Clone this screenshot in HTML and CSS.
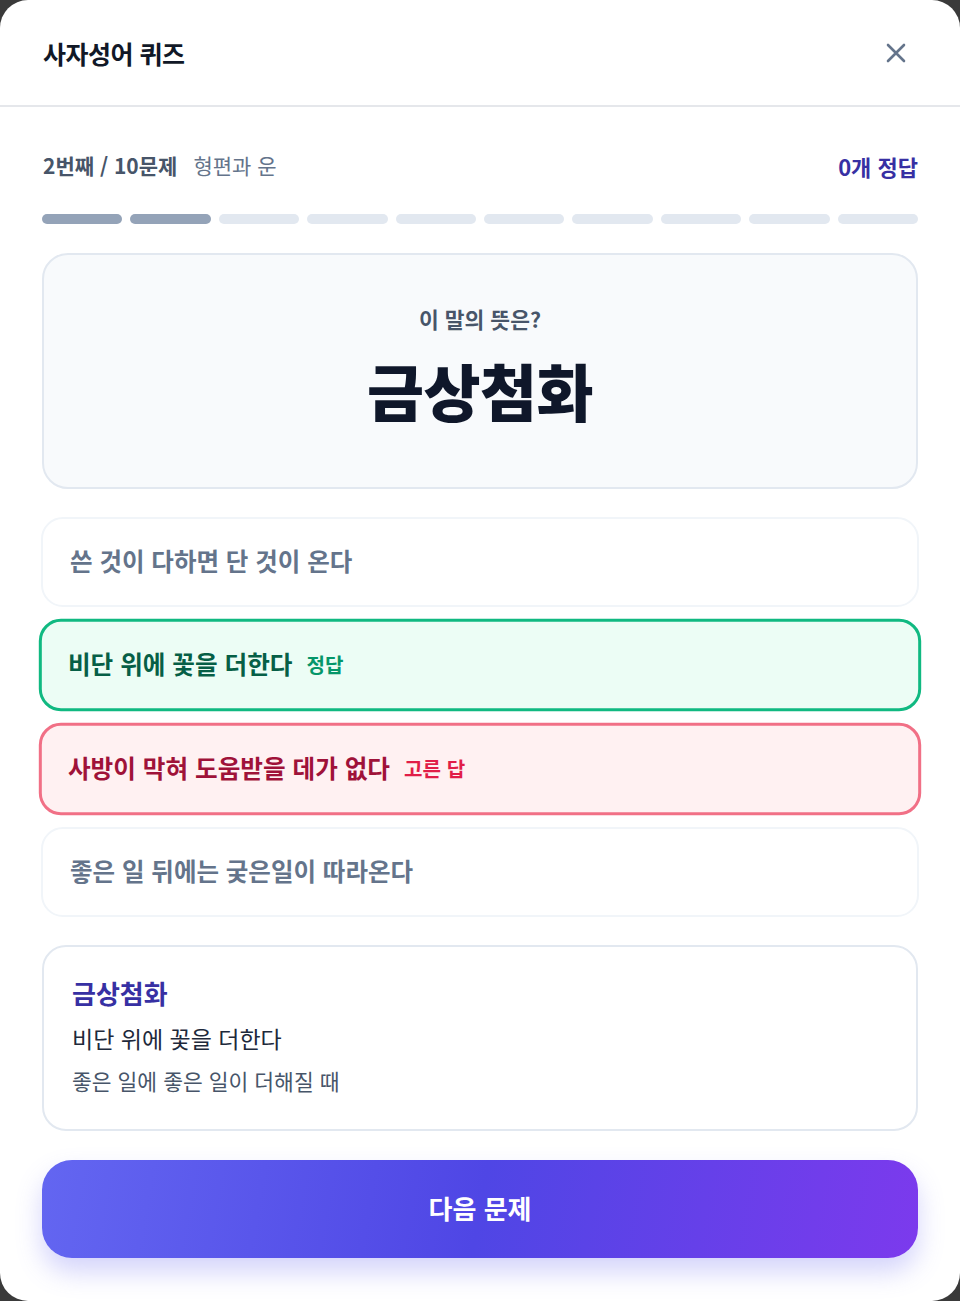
FILE: index.html
```html
<!DOCTYPE html>
<html lang="ko">
<head>
<meta charset="utf-8">
<title>사자성어 퀴즈</title>
<link rel="stylesheet" href="styles.css">
</head>
<body>
<div class="modal">
  <header class="header">
    <h1 class="title">사자성어 퀴즈</h1>
    <button class="close" aria-label="닫기">
      <svg width="24" height="24" viewBox="0 0 24 24" fill="none" stroke="#64748b" stroke-width="2.6" stroke-linecap="round"><path d="M4 4L20 20M20 4L4 20"/></svg>
    </button>
  </header>
  <main class="content">
    <div class="progress-row">
      <div class="progress-left"><span class="count">2번째 / 10문제</span><span class="category">형편과 운</span></div>
      <div class="score">0개 정답</div>
    </div>
    <div class="bars">
      <span class="bar done"></span><span class="bar done"></span><span class="bar"></span><span class="bar"></span><span class="bar"></span><span class="bar"></span><span class="bar"></span><span class="bar"></span><span class="bar"></span><span class="bar"></span>
    </div>
    <section class="question">
      <div class="q-label">이 말의 뜻은?</div>
      <div class="q-word">금상첨화</div>
    </section>
    <div class="options">
      <div class="option">쓴 것이 다하면 단 것이 온다</div>
      <div class="option correct">비단 위에 꽃을 더한다<span class="badge">정답</span></div>
      <div class="option wrong">사방이 막혀 도움받을 데가 없다<span class="badge">고른 답</span></div>
      <div class="option">좋은 일 뒤에는 궂은일이 따라온다</div>
    </div>
    <section class="explain">
      <div class="ex-title">금상첨화</div>
      <div class="ex-literal">비단 위에 꽃을 더한다</div>
      <div class="ex-meaning">좋은 일에 좋은 일이 더해질 때</div>
    </section>
    <button class="next">다음 문제</button>
  </main>
</div>
</body>
</html>
```
FILE: styles.css
```css
* { box-sizing: border-box; }
html, body { margin: 0; padding: 0; }
body {
  background: #3a3a3a;
  font-family: "Noto Sans CJK KR", "Noto Sans", sans-serif;
}
.modal {
  width: 960px;
  height: 1301px;
  background: #ffffff;
  border-radius: 28px;
  overflow: hidden;
  display: flex;
  flex-direction: column;
}
.header {
  height: 107px;
  padding: 0 42px 0 43px;
  border-bottom: 2px solid #e5e7eb;
  display: flex;
  align-items: center;
  justify-content: space-between;
}
.title {
  margin: 0;
  font-size: 25px;
  line-height: 34px;
  font-weight: 700;
  letter-spacing: -0.5px;
  color: #111827;
}
.close {
  border: 0;
  background: none;
  padding: 0;
  width: 24px;
  height: 24px;
  margin-right: 10px;
  display: flex;
}
.content {
  flex: 1;
  padding: 45px 41px 0;
  display: flex;
  flex-direction: column;
}
.progress-row {
  display: flex;
  justify-content: space-between;
  align-items: center;
  padding: 0 1px 0 2px;
  height: 28px;
  line-height: 28px;
}
.count {
  font-size: 21px;
  font-weight: 700;
  color: #475569;
}
.category {
  font-size: 21px;
  font-weight: 400;
  color: #64748b;
  margin-left: 16px;
}
.score {
  font-size: 22px;
  font-weight: 700;
  color: #3730a3;
}
.bars {
  margin: 34px 1px 0;
  display: flex;
  gap: 8px;
}
.bar {
  flex: 1;
  height: 10px;
  border-radius: 5px;
  background: #e2e8f0;
}
.bar.done { background: #94a3b8; }
.question {
  margin: 29px 1px 0;
  height: 236px;
  border: 2px solid #e2e8f0;
  border-radius: 26px;
  background: #f8fafc;
  padding: 50px 24px 0;
  text-align: center;
}
.q-label {
  font-size: 21.5px;
  line-height: 28px;
  font-weight: 600;
  color: #475569;
}
.q-word {
  margin-top: 21px;
  font-size: 62px;
  line-height: 72px;
  font-weight: 900;
  color: #0f172a;
  letter-spacing: -0.5px;
}
.options {
  margin-top: 28px;
  display: flex;
  flex-direction: column;
  gap: 12px;
}
.option {
  display: flex;
  align-items: center;
  gap: 14px;
  height: 90px;
  padding: 0 27px 4px;
  border: 2px solid #f1f5f9;
  border-radius: 22px;
  background: #ffffff;
  font-size: 24.5px;
  font-weight: 700;
  color: #64748b;
}
.option.correct,
.option.wrong {
  height: 92px;
  border-width: 3px;
  padding: 0 26px 4px;
  transform: scale(1.005);
}
.option.correct {
  border-color: #10b981;
  background: #ecfdf5;
  color: #065f46;
}
.option.wrong {
  border-color: #f17086;
  background: #fff1f2;
  color: #9f1239;
}
.badge {
  font-size: 20px;
  font-weight: 700;
  margin-top: 3px;
}
.correct .badge { color: #059669; }
.wrong .badge { color: #e11d48; }
.explain {
  margin: 28px 1px 0;
  border: 2px solid #e2e8f0;
  border-radius: 24px;
  background: #ffffff;
  padding: 29px 28px 34px;
}
.ex-title {
  font-size: 26px;
  line-height: 34px;
  font-weight: 700;
  color: #3730a3;
}
.ex-literal {
  margin-top: 12px;
  font-size: 23px;
  line-height: 32px;
  font-weight: 400;
  color: #1e293b;
}
.ex-meaning {
  margin-top: 13px;
  font-size: 21.5px;
  line-height: 28px;
  font-weight: 400;
  color: #475569;
}
.next {
  margin: 29px 1px 0;
  height: 98px;
  padding: 0 0 4px;
  border: 0;
  border-radius: 30px;
  background: linear-gradient(100deg, #6366f1 0%, #4f46e5 50%, #7c3aed 100%);
  box-shadow: 0 14px 26px rgba(99, 102, 241, 0.28);
  color: #ffffff;
  font-family: "Noto Sans CJK KR", "Noto Sans", sans-serif;
  font-size: 26px;
  font-weight: 700;
}
```
